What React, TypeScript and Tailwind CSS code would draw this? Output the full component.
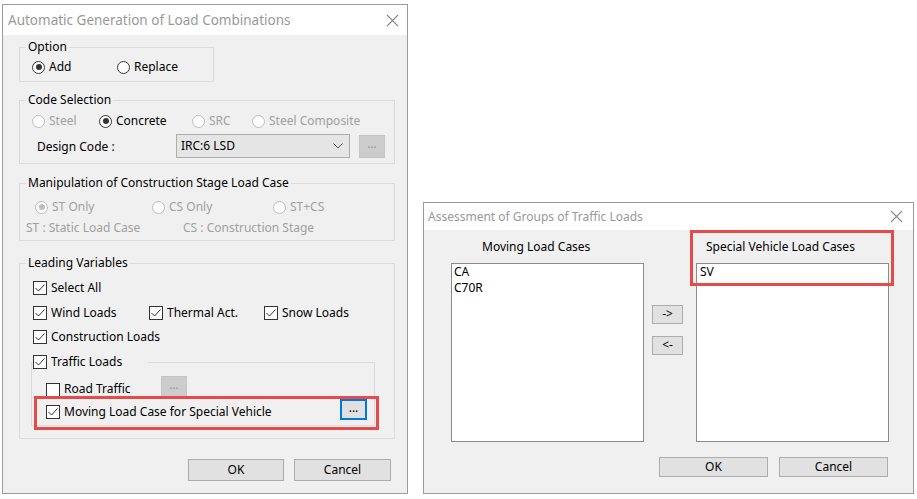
import type { ReactNode } from "react";

function CloseIcon() {
  return (
    <svg width="13" height="13" viewBox="0 0 13 13" className="shrink-0">
      <path d="M1 1 L12 12 M12 1 L1 12" stroke="#8a8a8a" strokeWidth="1.1" fill="none" />
    </svg>
  );
}

function Radio({
  label,
  checked = false,
  disabled = false,
  className = "",
}: {
  label: string;
  checked?: boolean;
  disabled?: boolean;
  className?: string;
}) {
  return (
    <label className={`flex h-[16px] items-center gap-[4px] ${className}`}>
      <span
        className={`flex h-[13px] w-[13px] shrink-0 items-center justify-center rounded-full border bg-white ${
          disabled ? "border-[#bcbcbc]" : "border-[#333333]"
        }`}
      >
        {checked ? (
          <span
            className={`h-[6px] w-[6px] rounded-full ${disabled ? "bg-[#bcbcbc]" : "bg-[#333333]"}`}
          />
        ) : null}
      </span>
      <span className={disabled ? "text-[#a0a0a0]" : "text-black"}>{label}</span>
    </label>
  );
}

function Check({ label, checked = true, className = "" }: { label: string; checked?: boolean; className?: string }) {
  return (
    <label className={`flex h-[16px] items-center gap-[4px] ${className}`}>
      <CheckBox checked={checked} />
      <span className="text-black">{label}</span>
    </label>
  );
}

function CheckBox({ checked }: { checked: boolean }) {
  return (
    <span className="flex h-[14px] w-[14px] shrink-0 items-center justify-center border border-[#333333] bg-white">
      {checked ? (
        <svg width="12" height="12" viewBox="0 0 12 12">
          <path d="M1.5 6 L4.5 9 L10.5 2.5" stroke="#333333" strokeWidth="1" fill="none" />
        </svg>
      ) : null}
    </span>
  );
}

function Group({
  title,
  className = "",
  children,
}: {
  title: ReactNode;
  className?: string;
  children: ReactNode;
}) {
  return (
    <fieldset className={`border border-[#dcdcdc] ${className}`}>
      <legend className="ml-[6px] px-[2px] leading-[16px] text-black">{title}</legend>
      {children}
    </fieldset>
  );
}

function DotsButton({ active = false }: { active?: boolean }) {
  return active ? (
    <span className="flex h-[21px] w-[27px] items-center justify-center border-2 border-[#0078d7] bg-[#e1e1e1] pb-[4px] text-black">
      ...
    </span>
  ) : (
    <span className="flex h-[21px] w-[26px] items-center justify-center border border-[#c4c4c4] bg-[#cccccc] pb-[4px] text-[#9a9a9a]">
      ...
    </span>
  );
}

function LoadCombinationDialog() {
  return (
    <div className="absolute left-[2px] top-[4px] flex h-[490px] w-[406px] flex-col border border-[#9b9b9b] bg-[#f0f0f0]">
      <div className="flex h-[30px] shrink-0 items-center justify-between bg-white pl-[5px] pr-[8px]">
        <span className="text-[13.5px] text-[#999999]">Automatic Generation of Load Combinations</span>
        <CloseIcon />
      </div>

      <div className="px-[16px]">
        <Group title="Option" className="mt-[4px] w-[195px]">
          <div className="flex pb-[6px] pl-[12px] pt-[4px]">
            <Radio label="Add" checked className="w-[85px]" />
            <Radio label="Replace" />
          </div>
        </Group>

        <Group title="Code Selection" className="mt-[10px] w-[376px]">
          <div className="pb-[5px] pl-[12px] pt-[5px]">
            <div className="flex">
              <Radio label="Steel" disabled className="w-[67px]" />
              <Radio label="Concrete" checked className="w-[93px]" />
              <Radio label="SRC" disabled className="w-[60px]" />
              <Radio label="Steel Composite" disabled />
            </div>
            <div className="mt-[5px] flex items-center">
              <span className="ml-[5px] mt-[2px] w-[139px]">Design Code :</span>
              <div className="flex h-[24px] w-[174px] items-center justify-between border border-[#adadad] bg-[#e5e5e5] pl-[4px] pr-[6px]">
                <span>IRC:6 LSD</span>
                <svg width="10" height="6" viewBox="0 0 10 6">
                  <path d="M0.5 0.5 L5 5 L9.5 0.5" stroke="#555555" strokeWidth="1" fill="none" />
                </svg>
              </div>
              <span className="ml-[9px] flex h-[23px] w-[26px] items-center justify-center border border-[#c4c4c4] bg-[#cccccc] pb-[4px] text-[#9a9a9a]">
                ...
              </span>
            </div>
          </div>
        </Group>

        <Group title="Manipulation of Construction Stage Load Case" className="mt-[11px] w-[376px]">
          <div className="pb-[4px] pt-[8px]">
            <div className="flex pl-[15px]">
              <Radio label="ST Only" checked disabled className="w-[117px]" />
              <Radio label="CS Only" disabled className="w-[121px]" />
              <Radio label="ST+CS" disabled />
            </div>
            <div className="mt-[5px] flex h-[16px] items-center pl-[6px] text-[#a0a0a0]">
              <span className="w-[157px]">ST : Static Load Case</span>
              <span>CS : Construction Stage</span>
            </div>
          </div>
        </Group>

        <Group title="Leading Variables" className="mt-[14px] w-[376px]">
          <div className="pb-[12px] pl-[13px] pt-[9px]">
            <Check label="Select All" />
            <div className="mt-[9px] flex">
              <Check label="Wind Loads" className="w-[116px]" />
              <Check label="Thermal Act." className="w-[115px]" />
              <Check label="Snow Loads" />
            </div>
            <Check label="Construction Loads" className="mt-[8px]" />

            <fieldset className="-ml-[2px] mt-[9px] w-[344px] border border-[#dcdcdc]">
              <legend className="ml-[1px] w-[115px] leading-[16px]">
                <Check label="Traffic Loads" />
              </legend>
              <div className="pb-[5px] pl-[14px] pt-[6px]">
                <div className="flex h-[21px] items-end">
                  <CheckBox checked={false} />
                  <span className="ml-[4px] w-[97px] leading-[16px]">Road Traffic</span>
                  <DotsButton />
                </div>
                <div className="mt-[2px] flex h-[21px] items-center">
                  <span className="mt-[5px]">
                    <CheckBox checked />
                  </span>
                  <span className="ml-[4px] mt-[4px] w-[276px] leading-[16px]">Moving Load Case for Special Vehicle</span>
                  <DotsButton active />
                </div>
              </div>
            </fieldset>
          </div>
        </Group>

        <div className="mt-[20px] flex justify-end gap-[10px]">
          <button className="h-[22px] w-[96px] border border-[#adadad] bg-[#e1e1e1]">OK</button>
          <button className="h-[22px] w-[97px] border border-[#adadad] bg-[#e1e1e1]">Cancel</button>
        </div>
      </div>

      <div className="absolute left-[31px] top-[391px] h-[34px] w-[345px] border-[3px] border-[#e84a4a]" />
    </div>
  );
}

function TrafficLoadsDialog() {
  return (
    <div className="absolute left-[423px] top-[202px] flex h-[292px] w-[491px] flex-col border border-[#9b9b9b] bg-[#f0f0f0]">
      <div className="flex h-[27px] shrink-0 items-center justify-between bg-white pl-[4px] pr-[10px]">
        <span className="text-[12px] text-[#999999]">Assessment of Groups of Traffic Loads</span>
        <CloseIcon />
      </div>

      <div className="flex pl-[27px] pt-[9px]">
        <div>
          <div className="pl-[31px] leading-[16px]">Moving Load Cases</div>
          <div className="mt-[8px] h-[179px] w-[193px] border border-[#8c8c8c] bg-white pl-[2px] leading-[16px]">
            <div>CA</div>
            <div>C70R</div>
          </div>
        </div>
        <div className="ml-[8px] flex w-[31px] flex-col pt-[66px]">
          <button className="h-[19px] border border-[#adadad] bg-[#e1e1e1] pb-[2px] leading-[14px]">-&gt;</button>
          <button className="mt-[12px] h-[19px] border border-[#adadad] bg-[#e1e1e1] pb-[2px] leading-[14px]">&lt;-</button>
        </div>
        <div className="ml-[13px]">
          <div className="pl-[10px] leading-[16px]">Special Vehicle Load Cases</div>
          <div className="mt-[8px] h-[179px] w-[193px] border border-[#8c8c8c] bg-white pl-[3px] leading-[16px]">
            <div>SV</div>
          </div>
        </div>
      </div>

      <div className="mt-[15px] flex justify-end gap-[11px] pr-[25px]">
        <button className="h-[20px] w-[109px] border border-[#adadad] bg-[#e1e1e1]">OK</button>
        <button className="h-[20px] w-[109px] border border-[#adadad] bg-[#e1e1e1]">Cancel</button>
      </div>

      <div className="absolute left-[266px] top-[27px] h-[56px] w-[204px] border-[3px] border-[#e84a4a]" />
    </div>
  );
}

export default function App() {
  return (
    <div className="relative h-[499px] w-[917px] overflow-hidden bg-white font-['Noto_Sans',sans-serif] text-[12px] text-black">
      <LoadCombinationDialog />
      <TrafficLoadsDialog />
    </div>
  );
}
